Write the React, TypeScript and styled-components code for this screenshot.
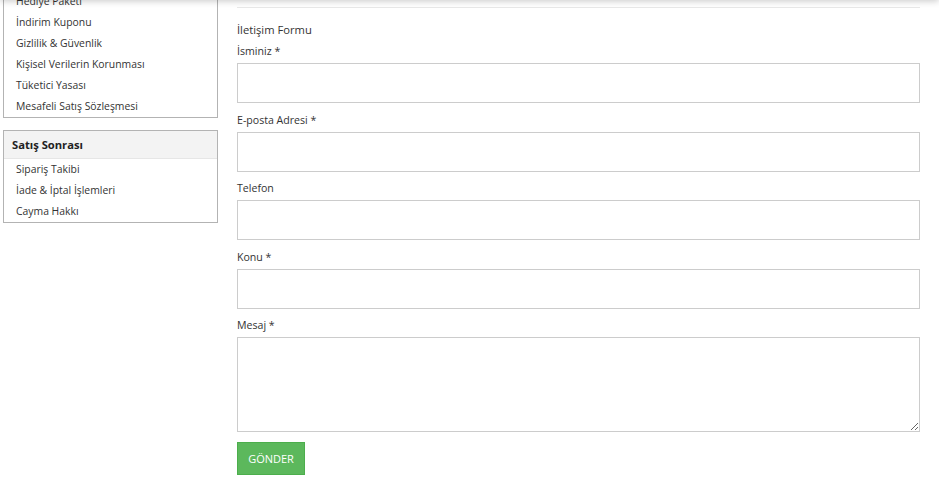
import React from "react";
import styled, { createGlobalStyle } from "styled-components";

const GlobalStyle = createGlobalStyle`
  html, body {
    margin: 0;
    padding: 0;
    background: #fff;
    font-family: "Open Sans", "Noto Sans", Arial, sans-serif;
    color: #333;
    overflow: hidden;
  }
`;

const TopShadow = styled.div`
  position: fixed;
  top: -10px;
  left: 0;
  right: 0;
  height: 10px;
  box-shadow: 0 1px 7px rgba(0, 0, 0, 0.22);
  z-index: 10;
`;

const Page = styled.div`
  display: flex;
  align-items: flex-start;
  gap: 19px;
  padding: 0 19px 0 3px;
`;

const Sidebar = styled.aside`
  width: 215px;
  flex-shrink: 0;
  display: flex;
  flex-direction: column;
  gap: 12px;
  margin-top: -10px;
`;

const Box = styled.div`
  border: 1px solid #b3b3b3;
  background: #fff;
`;

const BoxTitle = styled.div`
  height: 27px;
  line-height: 27px;
  padding-left: 8px;
  background: #f3f3f3;
  border-bottom: 1px solid #e6e6e6;
  font-size: 11.2px;
  font-weight: 700;
  color: #222;
`;

const MenuList = styled.ul`
  list-style: none;
  margin: 0;
  padding: 0;
`;

const MenuItem = styled.li`
  height: 21px;
  line-height: 21px;
  padding-left: 12px;
  font-size: 10.4px;
  color: #333;
`;

const Main = styled.main`
  flex: 1;
  padding-top: 7px;
`;

const Divider = styled.div`
  height: 1px;
  background: #e8e8e8;
`;

const FormTitle = styled.h3`
  margin: 14px 0 5px;
  font-size: 11.2px;
  font-weight: 400;
  line-height: 16px;
  color: #333;
`;

const Field = styled.div`
  display: flex;
  flex-direction: column;
  gap: 4px;
  margin-bottom: 8.5px;
`;

const Label = styled.label`
  font-size: 10.6px;
  line-height: 16px;
  color: #333;
`;

const Input = styled.input`
  box-sizing: border-box;
  width: 100%;
  height: 40px;
  margin: 0;
  border: 1px solid #cccccc;
  border-radius: 0;
  outline: none;
  padding: 6px 10px;
  font-family: inherit;
  font-size: 12px;
`;

const TextArea = styled.textarea`
  box-sizing: border-box;
  width: 100%;
  height: 95px;
  margin: 0;
  border: 1px solid #cccccc;
  border-radius: 0;
  outline: none;
  padding: 6px 10px;
  font-family: inherit;
  font-size: 12px;
  display: block;
`;

const SubmitButton = styled.button`
  margin-top: 1.5px;
  width: 68px;
  height: 33px;
  background: #5cb85c;
  border: 1px solid #4cae4c;
  color: #fff;
  font-family: inherit;
  font-size: 11px;
  text-transform: uppercase;
  cursor: pointer;
  padding: 0;
`;

const firstMenu = [
  "Hediye Paketi",
  "İndirim Kuponu",
  "Gizlilik & Güvenlik",
  "Kişisel Verilerin Korunması",
  "Tüketici Yasası",
  "Mesafeli Satış Sözleşmesi",
];

const afterSales = ["Sipariş Takibi", "İade & İptal İşlemleri", "Cayma Hakkı"];

const fields = [
  { id: "name", label: "İsminiz *" },
  { id: "email", label: "E-posta Adresi *" },
  { id: "phone", label: "Telefon" },
  { id: "subject", label: "Konu *" },
];

const App = () => {
  return (
    <>
      <GlobalStyle />
      <TopShadow />
      <Page>
        <Sidebar>
          <Box>
            <MenuList>
              {firstMenu.map((item) => (
                <MenuItem key={item}>{item}</MenuItem>
              ))}
            </MenuList>
          </Box>
          <Box>
            <BoxTitle>Satış Sonrası</BoxTitle>
            <MenuList>
              {afterSales.map((item) => (
                <MenuItem key={item}>{item}</MenuItem>
              ))}
            </MenuList>
          </Box>
        </Sidebar>
        <Main>
          <Divider />
          <FormTitle>İletişim Formu</FormTitle>
          <form onSubmit={(e) => e.preventDefault()}>
            {fields.map((f) => (
              <Field key={f.id}>
                <Label htmlFor={f.id}>{f.label}</Label>
                <Input id={f.id} type="text" />
              </Field>
            ))}
            <Field>
              <Label htmlFor="message">Mesaj *</Label>
              <TextArea id="message" />
            </Field>
            <SubmitButton type="submit">Gönder</SubmitButton>
          </form>
        </Main>
      </Page>
    </>
  );
};

export default App;
